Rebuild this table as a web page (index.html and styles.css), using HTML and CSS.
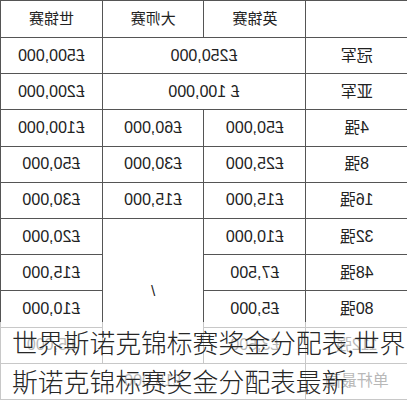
FILE: index.html
```html
<!DOCTYPE html>
<html lang="zh">
<head>
<meta charset="utf-8">
<link rel="stylesheet" href="styles.css">
</head>
<body>
<div class="page">
  <table class="prize">
    <tr class="head">
      <td></td><td>英锦赛</td><td>大师赛</td><td>世锦赛</td>
    </tr>
    <tr><td>冠军</td><td colspan="2">£250,000</td><td>£500,000</td></tr>
    <tr><td>亚军</td><td colspan="2">£ 100,000</td><td>£200,000</td></tr>
    <tr><td>4强</td><td>£50,000</td><td>£60,000</td><td>£100,000</td></tr>
    <tr><td>8强</td><td>£25,000</td><td>£30,000</td><td>£50,000</td></tr>
    <tr><td>16强</td><td>£15,000</td><td>£15,000</td><td>£30,000</td></tr>
    <tr><td>32强</td><td>£10,000</td><td rowspan="4" class="slash">/</td><td>£20,000</td></tr>
    <tr><td>48强</td><td>£7,500</td><td>£15,000</td></tr>
    <tr><td>80强</td><td>£5,000</td><td>£10,000</td></tr>
    <tr><td>112强</td><td>£3,500</td><td>£5,000</td></tr>
    <tr><td>单杆最高</td><td colspan="3">£15,000</td></tr>
  </table>
  <div class="caption">世界斯诺克锦标赛奖金分配表,世界<br>斯诺克锦标赛奖金分配表最新</div>
</div>
</body>
</html>
```

FILE: styles.css
```css
html, body {
  margin: 0;
  padding: 0;
  background: #fff;
}
.page {
  position: relative;
  width: 407px;
  height: 400px;
  overflow: hidden;
}
.prize {
  width: 408px;
  border-collapse: collapse;
  table-layout: fixed;
  transform: scaleX(-1);
  transform-origin: 204px 0;
  font-family: "Liberation Sans", "Noto Sans CJK SC", sans-serif;
  font-size: 16px;
  color: #222;
}
.prize td {
  border: 1px solid #555;
  text-align: center;
  vertical-align: middle;
  padding: 0;
  height: 35.2px;
  line-height: 20px;
}
.prize .head td {
  height: 36px;
  font-size: 15px;
}
.prize .slash {
  font-size: 15px;
}
.caption {
  position: absolute;
  left: 0;
  right: 0;
  bottom: 0;
  height: 78px;
  padding-left: 12px;
  background: rgba(255, 255, 255, 0.68);
  font-family: "Noto Sans CJK SC", sans-serif;
  font-weight: 300;
  font-size: 25.8px;
  line-height: 39px;
  color: #262626;
  white-space: nowrap;
}
```
